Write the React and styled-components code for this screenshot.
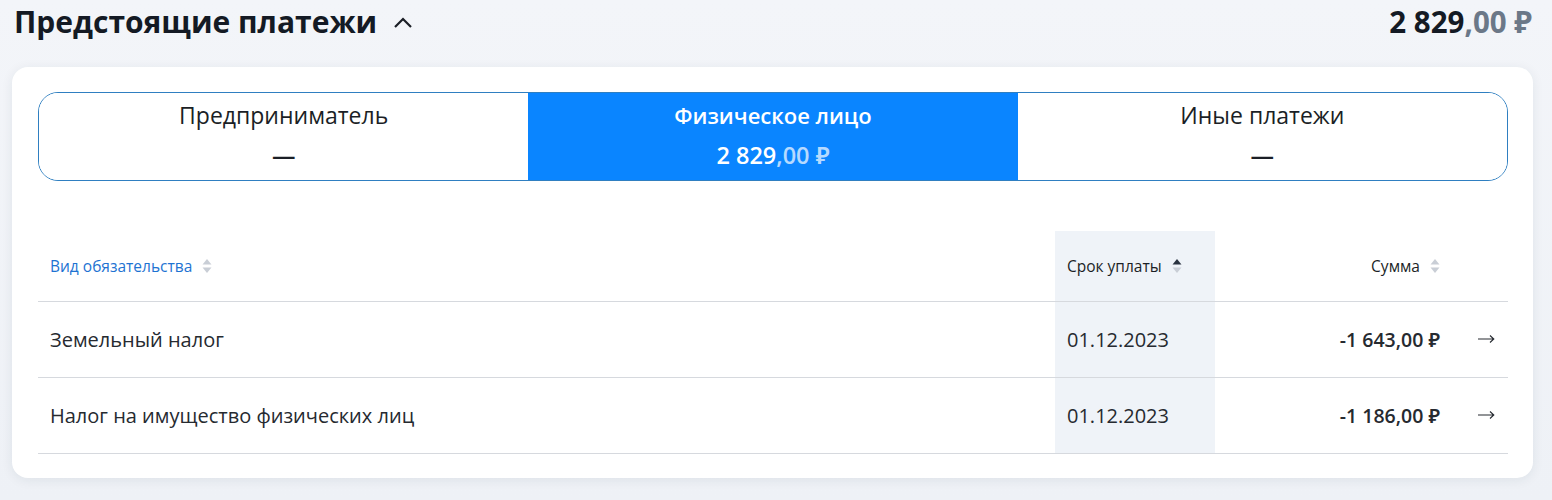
import React from 'react'
import styled, { createGlobalStyle } from 'styled-components'

const GlobalStyle = createGlobalStyle`
  body {
    margin: 0;
    background: #eef1f6;
    font-family: 'Open Sans', 'Noto Sans', sans-serif;
    color: #1b1f26;
  }
`

const tabs = [
  { title: 'Предприниматель', value: null },
  { title: 'Физическое лицо', value: ['2 829', ',00 ₽'], active: true },
  { title: 'Иные платежи', value: null },
]

const rows = [
  { name: 'Земельный налог', date: '01.12.2023', sum: '-1 643,00 ₽' },
  { name: 'Налог на имущество физических лиц', date: '01.12.2023', sum: '-1 186,00 ₽' },
]

const SortIcon = ({ up }) => (
  <SortSvg width="10" height="16" viewBox="0 0 10 16">
    <path d="M5 1 L9.5 6.5 L0.5 6.5 Z" fill={up ? '#2a3340' : '#c9ced6'} />
    <path d="M5 15 L9.5 9.5 L0.5 9.5 Z" fill="#c9ced6" />
  </SortSvg>
)

const ArrowIcon = () => (
  <svg width="17" height="10" viewBox="0 0 17 10">
    <path d="M0 5 H15.5 M12 1.5 L15.8 5 L12 8.5" fill="none" stroke="#262a30" strokeWidth="1.1" />
  </svg>
)

const App = () => {
  return (
    <Page>
      <GlobalStyle />
      <Header>
        <TitleWrap>
          <Title>Предстоящие платежи</Title>
          <svg width="20" height="14" viewBox="0 0 20 14">
            <path d="M2 12 L10 4 L18 12" fill="none" stroke="#1b1f26" strokeWidth="2.2" />
          </svg>
        </TitleWrap>
        <Total>
          2 829<Cents>,00 ₽</Cents>
        </Total>
      </Header>

      <Card>
        <Tabs>
          {tabs.map((t) => (
            <Tab key={t.title} $active={t.active}>
              <TabTitle $active={t.active}>{t.title}</TabTitle>
              <TabValue>
                {t.value ? (
                  <>
                    {t.value[0]}
                    <TabCents>{t.value[1]}</TabCents>
                  </>
                ) : (
                  '—'
                )}
              </TabValue>
            </Tab>
          ))}
        </Tabs>

        <Table>
          <colgroup>
            <col />
            <col style={{ width: 160 }} />
            <col style={{ width: 240 }} />
            <col style={{ width: 53 }} />
          </colgroup>
          <thead>
            <tr>
              <Th $primary>
                <HeadLabel>
                  Вид обязательства <SortIcon />
                </HeadLabel>
              </Th>
              <Th $sorted>
                <HeadLabel>
                  Срок уплаты <SortIcon up />
                </HeadLabel>
              </Th>
              <Th $right>
                <HeadLabel>
                  Сумма <SortIcon />
                </HeadLabel>
              </Th>
              <Th />
            </tr>
          </thead>
          <tbody>
            {rows.map((r) => (
              <tr key={r.name}>
                <Td>{r.name}</Td>
                <Td $sorted>{r.date}</Td>
                <Td $right $bold>{r.sum}</Td>
                <Td $arrow>
                  <ArrowWrap>
                    <ArrowIcon />
                  </ArrowWrap>
                </Td>
              </tr>
            ))}
          </tbody>
        </Table>
      </Card>
    </Page>
  )
}

export default App

const Page = styled.div`
  width: 1552px;
  height: 500px;
  box-sizing: border-box;
  padding: 0 19px 0 12px;
  background: linear-gradient(180deg, #f3f5f9 0%, #eef1f6 100%);
`

const Header = styled.div`
  height: 67px;
  display: flex;
  align-items: flex-start;
  justify-content: space-between;
  padding: 2px 1px 0 2px;
  box-sizing: border-box;
`

const TitleWrap = styled.div`
  display: flex;
  align-items: center;
  gap: 16px;
`

const Title = styled.h1`
  margin: 0;
  font-size: 30px;
  line-height: 40px;
  font-weight: 700;
  color: #141a24;
`

const Total = styled.div`
  font-size: 29.5px;
  line-height: 40px;
  font-weight: 700;
  color: #141a24;
`

const Cents = styled.span`
  color: #6b7888;
`

const Card = styled.div`
  background: #fff;
  border-radius: 16px;
  box-shadow: 0 2px 12px rgba(30, 45, 70, 0.08);
  padding: 25px 25px 25px 26px;
  height: 411px;
  box-sizing: border-box;
`

const Tabs = styled.div`
  display: grid;
  grid-template-columns: repeat(3, 1fr);
  border: 1px solid #2f7fc1;
  border-radius: 20px;
  overflow: hidden;
  height: 89px;
  box-sizing: border-box;
`

const Tab = styled.div`
  display: flex;
  flex-direction: column;
  align-items: center;
  justify-content: center;
  gap: 12px;
  background: ${(p) => (p.$active ? '#0a85ff' : '#fff')};
  color: ${(p) => (p.$active ? '#fff' : '#1b1f26')};
`

const TabTitle = styled.div`
  font-size: ${(p) => (p.$active ? '22px' : '23px')};
  font-weight: ${(p) => (p.$active ? 600 : 500)};
  line-height: 28px;
  margin-top: -4px;
`

const TabValue = styled.div`
  font-size: 23.5px;
  line-height: 28px;
  font-weight: 600;
`

const TabCents = styled.span`
  opacity: 0.7;
`

const Table = styled.table`
  width: 100%;
  margin-top: 50px;
  border-collapse: collapse;
  table-layout: fixed;
`

const Th = styled.th`
  height: 70px;
  padding: 0 ${(p) => (p.$right ? '15px' : '13px')} 0 12px;
  font-size: 15.5px;
  font-weight: 500;
  text-align: ${(p) => (p.$right ? 'right' : 'left')};
  color: ${(p) => (p.$primary ? '#1e73d2' : '#1b1f26')};
  background: ${(p) => (p.$sorted ? '#eff3f8' : 'transparent')};
  border-bottom: 1px solid #d6d9de;
`

const HeadLabel = styled.span`
  display: inline-flex;
  align-items: center;
  gap: 10px;
`

const SortSvg = styled.svg`
  display: block;
`

const Td = styled.td`
  height: 75px;
  padding: 0 ${(p) => (p.$right ? '15px' : p.$arrow ? '0' : '13px')} 0 ${(p) => (p.$arrow ? '23px' : '12px')};
  font-size: ${(p) => (p.$bold ? '19.5px' : '20px')};
  font-weight: ${(p) => (p.$bold ? 600 : 400)};
  text-align: left;
  ${(p) => p.$right && 'text-align: right;'}
  color: #262a30;
  background: ${(p) => (p.$sorted ? '#eff3f8' : 'transparent')};
  border-bottom: 1px solid #d6d9de;
  vertical-align: middle;
`

const ArrowWrap = styled.span`
  display: inline-flex;
  transform: translateY(-3px);
`
